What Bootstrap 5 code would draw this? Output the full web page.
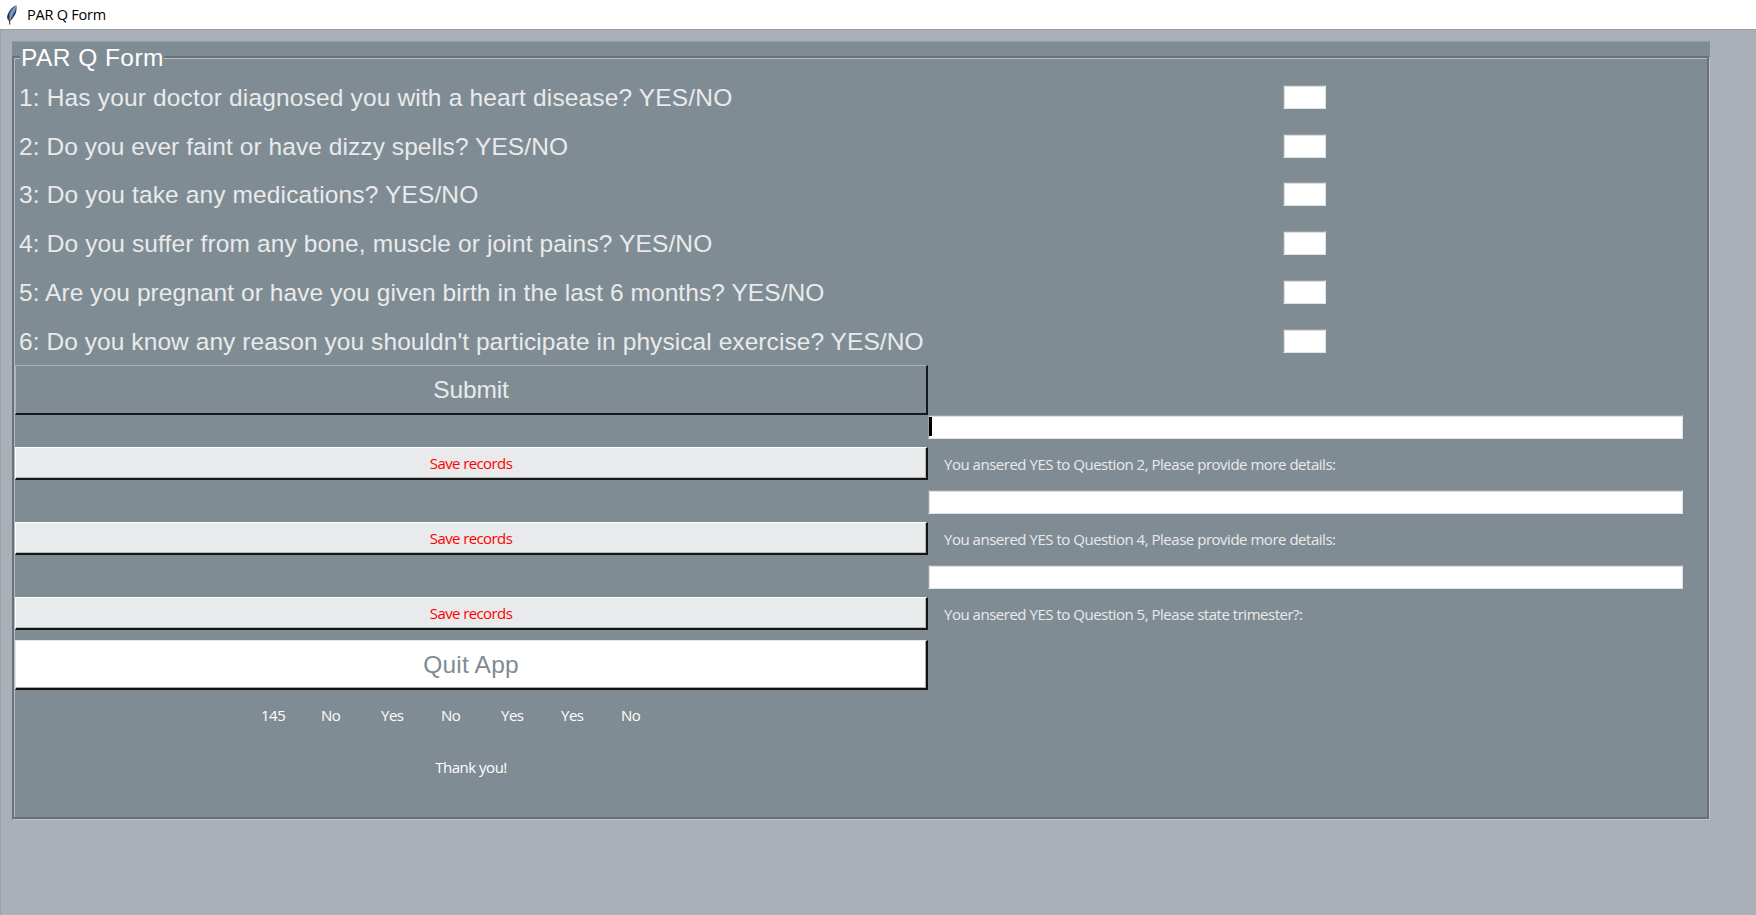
<!DOCTYPE html>
<html lang="en">
<head>
<meta charset="utf-8">
<title>PAR Q Form</title>
<link rel="stylesheet" href="https://cdn.jsdelivr.net/npm/bootstrap@5.3.0/dist/css/bootstrap.min.css">
<style>
  body { background: #a9b0b7; font-family: "Open Sans", "Noto Sans", sans-serif; font-size: 15px; line-height: 20px; color: #e9eaeb; height: 915px; overflow: hidden; }
  .titlebar { height: 29px; background: #fff; color: #000; font-size: 14.5px; letter-spacing: -.22px; padding-left: 5px; }
  .client { height: 886px; border-top: 1px solid #979fa2; border-left: 1px solid #9aa2a5; padding: 11px 0 0 11px; }
  .formframe { width: 1698px; height: 779px; background: #808c93; padding-top: 14px; border-top: 1px solid #919ba1; }
  .groove { width: 1697px; height: 763px; border: 2px solid #697179; box-shadow: inset 1px 1px #b5bbc0, 1px 1px #bcc1c8; }
  .arial { font-family: "Liberation Sans", Arial, sans-serif; font-size: 24.5px; line-height: 28px; letter-spacing: .07px; }
  .caption { width: 144px; height: 28px; margin: -14px 0 0 6px; padding-left: 1px; background: #808c93; color: #fff; white-space: nowrap; letter-spacing: .45px; }
  .formgrid { display: grid; grid-template-columns: 913px 755px; grid-template-rows: repeat(6, 48.75px) 50px repeat(3, 75px) 60px; margin: .5px 0 0 1px; }
  .question { padding: 2px 0 0 4px; white-space: nowrap; align-self: center; }
  .q1 { letter-spacing: .16px; }
  .q3, .q4 { letter-spacing: .13px; }
  .entry { background: #fff; border: 1px solid; border-color: #9c9fa0 #dfe4e6 #dfe4e6 #9c9fa0; box-shadow: inset 1px 1px #dedede; border-radius: 0; outline: 0; padding: 0 1px; height: 24px; }
  .short { width: 43px; justify-self: center; align-self: center; margin-right: 2px; }
  .tkbtn { border-radius: 0; border: 2px solid; padding: 0; width: 913px; white-space: nowrap; }
  .submit { height: 50px; background: #808c93 !important; color: #e9eaeb !important; border-color: #aab2b9 #14181a #14181a #aab2b9 !important; border-width: 1px 2px 2px 1px; letter-spacing: -.1px; }
  .save { height: 33px; margin-top: 32px; background: #e8eaeb !important; color: #f00 !important; border-color: #fff #151515 #151515 #fff !important; border-width: 1px 2px 2px 1px; box-shadow: inset -1px -1px #b5b8ba; font-size: 15px; line-height: 20px; }
  .quit { height: 50px; background: #fff !important; color: #808c93 !important; border-color: #e4e7e8 #111 #111 #e4e7e8 !important; border-width: 1px 2px 2px 1px; box-shadow: inset -1px -1px #aaa; letter-spacing: .2px; }
  .ui { letter-spacing: -.48px; white-space: nowrap; }
  .save.ui { letter-spacing: -.6px; }
  .wide { height: 24px; margin-left: -.5px; }
  .detail { margin: 15px 0 0 16px; line-height: 20px; }
  .caret { width: 3px; height: 19px; margin: 1px 0 0 -1px; background: #000; }
  .answers { display: grid; grid-template-columns: repeat(7, 60px); width: 420px; margin: 5px 0 0 247px; }
  .thanks { width: 914px; margin-top: 32px; }
</style>
<script src="https://cdn.jsdelivr.net/npm/bootstrap@5.3.0/dist/js/bootstrap.bundle.min.js"></script>
</head>
<body>
<header class="titlebar d-flex align-items-center">
  <svg width="14" height="20" viewBox="0 0 14 20" class="me-2">
    <path d="M11.5 0.5C8 1 4 5 2.5 10C1.5 13 2.5 15 4.5 16.5C8 14 11 9 11.5 5Z" fill="#2b4058"/>
    <path d="M11 1C8 2 5 6 4.2 9.5L5 14C9 11 11 6 11 1Z" fill="#5485bd"/>
    <path d="M10.5 1.5L5.5 11L4.7 16" fill="none" stroke="#9db3c8" stroke-width="1"/>
    <path d="M10.5 7L8 11M3.5 9L3 13" fill="none" stroke="#1c2733" stroke-width="1"/>
    <path d="M4.6 15V19.5" stroke="#444" stroke-width="1.2"/>
  </svg>
  <span>PAR Q Form</span>
</header>
<main class="client">
  <div class="formframe">
    <form class="groove">
      <div class="arial caption">PAR Q Form</div>
      <div class="formgrid">
        <label class="question arial q1">1: Has your doctor diagnosed you with a heart disease? YES/NO</label><input class="entry short">
        <label class="question arial">2: Do you ever faint or have dizzy spells? YES/NO</label><input class="entry short">
        <label class="question arial q3">3: Do you take any medications? YES/NO</label><input class="entry short">
        <label class="question arial q4">4: Do you suffer from any bone, muscle or joint pains? YES/NO</label><input class="entry short">
        <label class="question arial">5: Are you pregnant or have you given birth in the last 6 months? YES/NO</label><input class="entry short">
        <label class="question arial">6: Do you know any reason you shouldn't participate in physical exercise? YES/NO</label><input class="entry short">
        <button type="button" class="btn tkbtn arial submit">Submit</button><div></div>
        <button type="button" class="btn tkbtn save ui">Save records</button>
        <div><div class="entry wide"><div class="caret"></div></div><div class="detail ui">You ansered YES to Question 2, Please provide more details:</div></div>
        <button type="button" class="btn tkbtn save ui">Save records</button>
        <div><div class="entry wide"></div><div class="detail ui">You ansered YES to Question 4, Please provide more details:</div></div>
        <button type="button" class="btn tkbtn save ui">Save records</button>
        <div><div class="entry wide"></div><div class="detail ui">You ansered YES to Question 5, Please state trimester?:</div></div>
        <button type="button" class="btn tkbtn arial quit">Quit App</button>
      </div>
      <div class="answers ui text-white">
        <span>145</span><span>No</span><span>Yes</span><span>No</span><span>Yes</span><span>Yes</span><span>No</span>
      </div>
      <div class="thanks ui text-center text-white">Thank you!</div>
    </form>
  </div>
</main>
</body>
</html>
